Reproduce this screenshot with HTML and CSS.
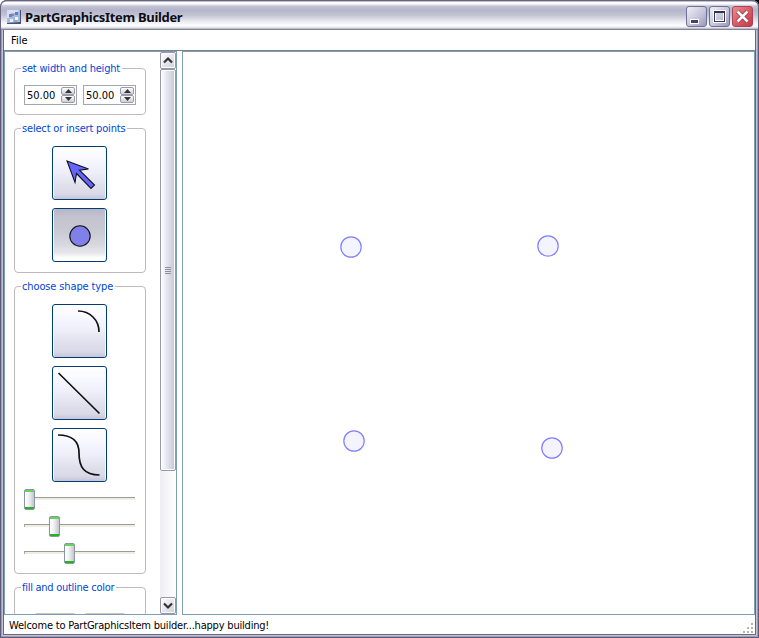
FILE: index.html
```html
<!DOCTYPE html>
<html lang="en">
<head>
<meta charset="utf-8">
<title>PartGraphicsItem Builder</title>
<link rel="stylesheet" href="styles.css">
</head>
<body>
<div class="window">
  <header class="titlebar">
    <svg class="app-icon" width="14" height="14" viewBox="0 0 14 14"><rect width="14" height="14" fill="#49536f"/><path d="M0 0H13V12L0 13Z" fill="#a9b9dc"/><path d="M0 0H12L10 3H4L2 8H0Z" fill="#d4e1f5"/><rect x="2" y="4" width="3" height="3" fill="#5489d6"/><rect x="8" y="2" width="3" height="3" fill="#4f83d2"/><rect x="5" y="4" width="2" height="2" fill="#c66f91"/><rect x="8" y="7" width="3" height="3" fill="#eef3fc"/><rect x="3" y="9" width="3" height="3" fill="#e9effa"/><rect x="7" y="10" width="3" height="2" fill="#8aa5d8"/></svg>
    <h1 class="title">PartGraphicsItem Builder</h1>
    <div class="controls">
      <button class="ctl" aria-label="Minimize"><svg width="19" height="19"><rect x="3" y="12" width="9" height="5" fill="#fff"/><rect x="4" y="13" width="7" height="3" fill="#43436a"/></svg></button>
      <button class="ctl" aria-label="Maximize"><svg width="19" height="19"><rect x="4.500" y="4.500" width="10" height="10" fill="none" stroke="#fff" stroke-width="3"/><rect x="4.500" y="4.500" width="10" height="10" fill="none" stroke="#33334f"/><path d="M4 5.500H15" stroke="#33334f"/></svg></button>
      <button class="ctl close" aria-label="Close"><svg width="19" height="19"><path d="M4.500 4.500L14.500 14.500M14.500 4.500L4.500 14.500" stroke="#8e3340" stroke-width="4"/><path d="M4.500 4.500L14.500 14.500M14.500 4.500L4.500 14.500" stroke="#fff" stroke-width="2.600"/></svg></button>
    </div>
  </header>
  <nav class="menubar"><span class="file">File</span></nav>
  <main class="content">
    <aside class="panel">
      <div class="groups">
        <section class="group size">
          <h2 class="legend l1">set width and height</h2>
          <div class="spins">
            <div class="spin"><span>50.00</span><div class="steps"><i><svg width="7" height="4"><path d="M0 4L3.500 0L7 4Z" fill="#333"/></svg></i><i><svg width="7" height="4"><path d="M0 0L3.500 4L7 0Z" fill="#333"/></svg></i></div></div>
            <div class="spin"><span>50.00</span><div class="steps"><i><svg width="7" height="4"><path d="M0 4L3.500 0L7 4Z" fill="#333"/></svg></i><i><svg width="7" height="4"><path d="M0 0L3.500 4L7 0Z" fill="#333"/></svg></i></div></div>
          </div>
        </section>
        <section class="group points">
          <h2 class="legend l2">select or insert points</h2>
          <div class="tools">
            <button class="tool" aria-label="Select"><svg width="53" height="52"><path d="M14 14L35.500 22L26.500 23.200L41.500 38L38 41.500L23.500 26.500L22 35.500Z" fill="#6464ff" stroke="#101018" stroke-width="1.100"/></svg></button>
            <button class="tool pressed" aria-label="Insert"><svg width="53" height="52"><circle cx="27" cy="27" r="10.200" fill="#8080e8" stroke="#101018" stroke-width="1.100"/></svg></button>
          </div>
        </section>
        <section class="group shapes">
          <h2 class="legend l3">choose shape type</h2>
          <div class="tools">
            <button class="tool" aria-label="Arc"><svg width="53" height="52"><path d="M25 6C37 6 46 15 46 27" class="stroke"/></svg></button>
            <button class="tool" aria-label="Line"><svg width="53" height="52"><path d="M5.500 6L46.500 46.500" class="stroke"/></svg></button>
            <button class="tool" aria-label="Curve"><svg width="53" height="52"><path d="M5 6C18 6 26 11 26 24C26 38 31 46 46.500 46" class="stroke"/></svg></button>
          </div>
          <div class="sliders">
            <div class="slider s1"><i class="groove"></i><i class="handle"></i></div>
            <div class="slider s2"><i class="groove"></i><i class="handle"></i></div>
            <div class="slider s3"><i class="groove"></i><i class="handle"></i></div>
          </div>
        </section>
        <section class="group colors">
          <h2 class="legend l4">fill and outline color</h2>
          <div class="swatches"><i></i><i></i></div>
        </section>
      </div>
      <div class="scrollbar">
        <div class="arrow"><svg width="14" height="15"><path d="M3 9.500L7 5.500L11 9.500" fill="none" stroke="#333" stroke-width="2.200"/></svg></div>
        <div class="thumb"><i></i><i></i><i></i><i></i></div>
        <div class="track"></div>
        <div class="arrow"><svg width="14" height="15"><path d="M3 5.500L7 9.500L11 5.500" fill="none" stroke="#333" stroke-width="2.200"/></svg></div>
      </div>
    </aside>
    <section class="canvas">
      <svg width="571" height="562" viewBox="183 52 571 562"><g fill="#f4f4ff" stroke="#8080ff" stroke-width="1.200"><circle cx="351" cy="247" r="10.200"/><circle cx="548" cy="246" r="10.200"/><circle cx="354" cy="441" r="10.200"/><circle cx="552" cy="448" r="10.200"/></g></svg>
    </section>
  </main>
  <footer class="status"><span class="message">Welcome to PartGraphicsItem builder...happy building!</span>
    <svg width="10" height="10" fill="#b8b5a2"><path d="M8 0h2v2H8zM4 4h2v2H4zM8 4h2v2H8zM0 8h2v2H0zM4 8h2v2H4zM8 8h2v2H8z"/></svg>
  </footer>
</div>
</body>
</html>
```

FILE: styles.css
```css
* { box-sizing: border-box; }
html { background: linear-gradient(90deg, #fff 50%, #000 50%); }
body { margin: 0; color: #000; font: 11px/14px "DejaVu Sans Condensed", "DejaVu Sans", sans-serif; }
svg { display: block; }
i { display: block; }
button { padding: 0; margin: 0; }

.window {
  width: 759px; height: 638px;
  display: flex; flex-direction: column;
  padding: 0 4px 4px;
  background: #fff;
  border-radius: 7px 7px 0 0;
  box-shadow: inset 0 0 0 1px #5e5c7c, inset 0 0 0 2px #9d9bb7, inset 0 0 0 3px #c5c4d6, inset 0 0 0 4px #686680;
  overflow: hidden;
}
.titlebar {
  height: 30px; flex: none; margin: 0 -4px;
  display: flex; align-items: flex-start;
  padding: 0 5px 0 6px;
  border: solid #66647f; border-width: 1px 1px 0;
  border-radius: 7px 7px 0 0;
  background: linear-gradient(#85839f 0, #fff 1px, #f8f8fc 3px, #c4c4d6 5px, #b5b5ca 9px, #c2c2d4 14px, #ededf3 21px, #fff 25px, #d8d8e4 27px, #a5a4b7 28px, #65647a 29px);
}
.app-icon { margin-top: 9px; }
.title { margin: 8px 0 0 4px; font: bold 13px/16px "Noto Sans", sans-serif; letter-spacing: -.32px; white-space: nowrap; color: #0c0c14; }
.controls { display: flex; gap: 2px; margin: 5px 0 0 auto; }
.ctl { width: 21px; height: 21px; border: 1px solid #6e7196; border-radius: 3px; background: linear-gradient(135deg, #f0f0f8, #c5c5dc 55%, #9999bb); }
.close { border-color: #a84358; background: linear-gradient(135deg, #e88e90, #d95760 55%, #bd3e4b); }

.menubar { height: 21px; flex: none; padding: 4px 7px 0; border-bottom: 1px solid #808080; }
.content { height: 564px; flex: none; display: flex; gap: 5px; }
.panel { width: 173px; display: flex; border: 1px solid #7f9db9; overflow: hidden; }
.groups { width: 155px; height: 562px; padding: 16px 14px 0 9px; display: flex; flex-direction: column; gap: 13px; overflow: hidden; }
.group { width: 132px; flex: none; border: 1px solid #bfb8bf; border-radius: 4px; }
.size { height: 47px; }
.points { height: 145px; }
.shapes { height: 288px; }
.colors { height: 60px; }
.legend { width: max-content; height: 14px; margin: -7px 0 0 6px; padding: 0 2px 0 1px; font: inherit; white-space: nowrap; color: #0046d5; background: #fff; }
.l1 { letter-spacing: -.2px; }
.l2 { letter-spacing: -.18px; }
.l3 { letter-spacing: -.13px; }
.l4 { letter-spacing: -.27px; }
.message { letter-spacing: -.2px; }

.spins { display: flex; gap: 6px; margin: 9px 0 0 9px; }
.spin { width: 53px; height: 20px; display: flex; justify-content: space-between; padding: 1px 1px 1px 2px; border: 1px solid #a0a8ac; line-height: 17px; }
.steps { display: flex; flex-direction: column; width: 14px; }
.steps i { height: 8px; display: grid; place-items: center; border: 1px solid #9a9aaa; border-radius: 2px; background: linear-gradient(#fff, #ceced9); }
.tools { display: flex; flex-direction: column; align-items: center; gap: 8px; margin: 10px 2px 0 0; }
.tool {
  width: 55px; height: 54px; border: 1px solid #003c74; border-radius: 3px;
  background: linear-gradient(#fff 0, #f9f9ff 10px, #f4f4ff 17px, #eeeef8 26px, #e0e0ed 38px, #d9d9e7 47px, #c7c4da 52px);
  box-shadow: inset 1px 0 #f7f9ff, inset -1px 0 #f7f9ff;
}
.pressed { background: linear-gradient(#b8b6c8, #c3c3cf 8px, #c8c8d2 20px, #d8d8e0 36px, #e6e6ec 44px, #fff 49px); }
.stroke { fill: none; stroke: #111; stroke-width: 1.7; }
.sliders { display: flex; flex-direction: column; gap: 6px; margin: 7px 0 0 9px; }
.slider { width: 111px; height: 21px; display: grid; align-items: center; }
.groove, .handle { grid-area: 1 / 1; }
.groove { height: 3px; margin-bottom: 2px; border-top: 1px solid #9b9b98; background: #f0eee2; border-left: 1px solid #aaa9a0; }
.handle { width: 11px; height: 21px; border: 1px solid #8998a0; border-radius: 2px; background: linear-gradient(#62d65a 0 2px, transparent 2px 17px, #21b421 17px), linear-gradient(90deg, #fff, #f3f3f5 40%, #c4c4d1); }
.s2 .handle { margin-left: 25px; }
.s3 .handle { margin-left: 40px; }
.swatches { display: flex; gap: 8px; margin: 18px 0 0 19px; }
.swatches i { width: 42px; height: 22px; border: 1px solid #c9c7ba; border-radius: 3px; }

.scrollbar { width: 16px; display: flex; flex-direction: column; background: linear-gradient(90deg, #eeedf4, #fff); }
.arrow, .thumb { flex: none; border: 1px solid #9796a9; border-radius: 2px; box-shadow: inset 0 0 0 1px #fff; }
.arrow { height: 17px; background: linear-gradient(135deg, #fff, #ceced9); }
.thumb { height: 402px; display: flex; flex-direction: column; align-items: center; justify-content: center; gap: 1px; background: linear-gradient(90deg, #fff, #e6e6ef 40%, #c5c5d6); }
.thumb i { width: 6px; height: 1px; background: #8e8ea0; }
.track { flex: 1; }
.canvas { width: 573px; border: 1px solid #7f9db9; }
.status { height: 19px; flex: none; display: flex; justify-content: space-between; padding: 4px 2px 0 5px; line-height: 13px; }
.status svg { margin-top: 4px; }
```
